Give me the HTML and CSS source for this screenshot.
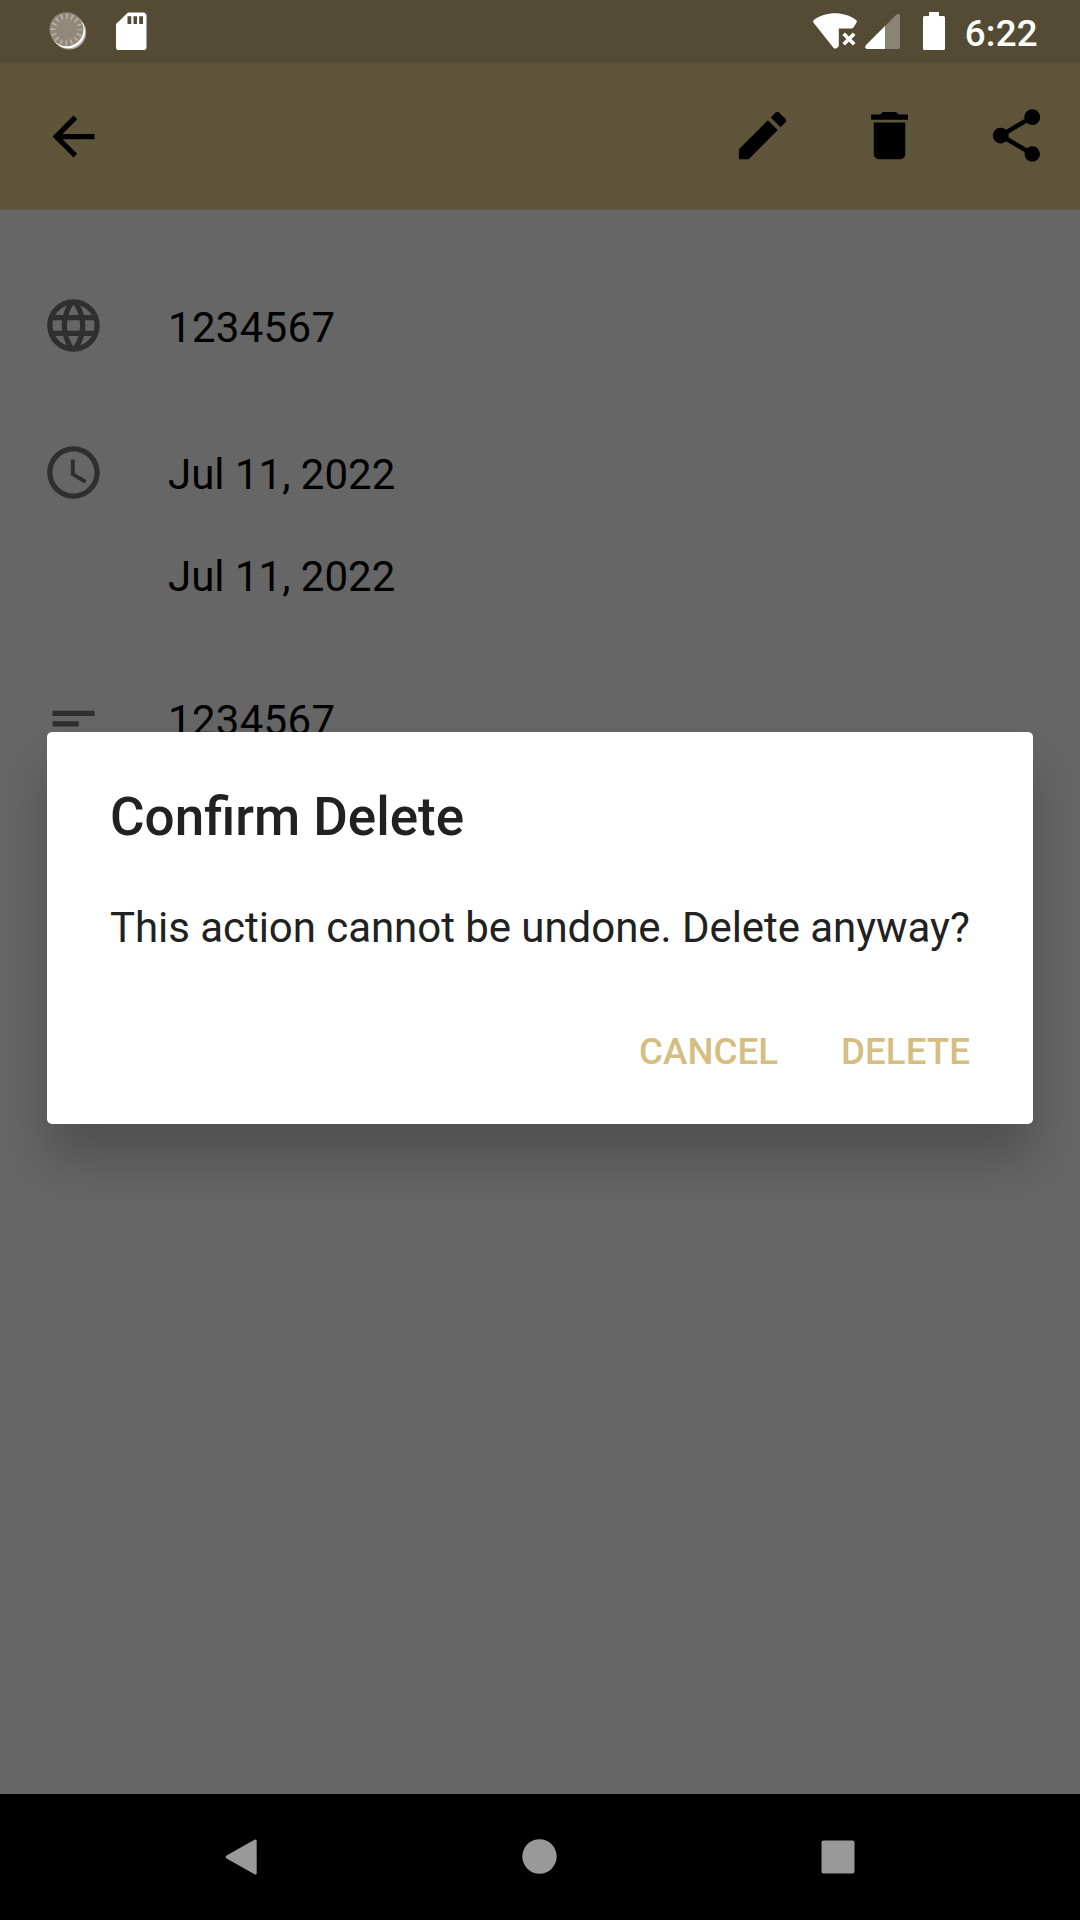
FILE: index.html
```html
<!DOCTYPE html>
<html lang="en">
<head>
<meta charset="utf-8">
<title>Confirm Delete</title>
<link rel="stylesheet" href="styles.css">
</head>
<body>
<div class="screen">
  <header class="status-bar">
    <div class="status-group">
      <svg class="status-icon" width="40" height="40" viewBox="0 0 40 40">
        <circle cx="21.300" cy="22.500" r="17" fill="#aaa497"/>
        <circle cx="20" cy="21.200" r="17" fill="#fff"/>
        <circle cx="18.500" cy="19.300" r="17" fill="#918a7a"/>
        <circle cx="18.500" cy="19.500" r="13.300" fill="none" stroke="#bbb6ab" stroke-width="5" stroke-dasharray="1.5 3.723" stroke-dashoffset=".75"/>
      </svg>
      <svg class="status-icon sd-icon" width="32" height="40" viewBox="0 0 32 40">
        <path fill="#fff" fill-rule="evenodd" d="M12 2.500h15q3.500 0 3.500 3.500v31q0 3.500-3.500 3.500H3.500Q0 40.500 0 37V14zM11.500 6.300v7.700h3.800V6.300zm6 0v7.700h3.500V6.300zm5.700 0v7.700H27V6.300z"/>
      </svg>
    </div>
    <div class="status-group">
      <svg class="status-icon" width="44" height="40" viewBox="0 0 44 40">
        <path fill="#fff" d="M.4 12.500Q-.4 11 .9 9.900C13 1 31 1 43 9.900q1.300 1.100.6 2.600l-2.800 4.500q-1 1.500-2.800 1.500H25.800v17.200c0 1-2.500 3.300-3.800 2.900q-1.200-.2-2-1.400z"/>
        <path stroke="#fff" stroke-width="3.700" fill="none" d="m30.700 23.700 10.500 10.600m0-10.600L30.700 34.300"/>
      </svg>
      <svg class="status-icon signal-icon" width="35" height="40" viewBox="0 0 35 40">
        <path fill="#8a8474" d="M20 16 31 5q4-3 4 1v31q0 2-2 2H20z"/>
        <path fill="#fff" d="M20 16v23H2q-3-.5-1-4z"/>
      </svg>
      <svg class="status-icon battery-icon" width="22" height="40" viewBox="0 0 22 40">
        <path fill="#fff" d="M6 2h10v4h4.500Q22 6 22 7.500v31q0 1.500-1.500 1.500h-19Q0 40 0 38.500v-31Q0 6 1.500 6H6z"/>
      </svg>
      <span class="time">6:22</span>
    </div>
  </header>

  <nav class="toolbar">
    <svg class="icon" viewBox="0 0 24 24"><path d="M20 11H7.830l5.590-5.590L12 4l-8 8 8 8 1.410-1.410L7.830 13H20z"/></svg>
    <div class="actions">
      <svg class="icon" viewBox="0 0 24 24"><path d="M3 17.250V21h3.750L17.810 9.940l-3.750-3.750zM20.710 7.040a1 1 0 0 0 0-1.410l-2.340-2.340a1 1 0 0 0-1.410 0l-1.830 1.830 3.750 3.750z"/></svg>
      <svg class="icon" viewBox="0 0 24 24"><path d="M6 19c0 1.100.9 2 2 2h8c1.100 0 2-.9 2-2V7H6zM19 4h-3.500l-1-1h-5l-1 1H5v2h14z"/></svg>
      <svg class="icon" viewBox="0 0 24 24"><path d="M18 16.080c-.76 0-1.440.3-1.960.77L8.910 12.700c.05-.23.09-.46.09-.7s-.04-.47-.09-.7l7.050-4.110c.54.5 1.250.81 2.040.81 1.660 0 3-1.340 3-3s-1.340-3-3-3-3 1.340-3 3c0 .24.04.47.09.7L8.040 9.810C7.500 9.310 6.790 9 6 9c-1.660 0-3 1.340-3 3s1.340 3 3 3c.79 0 1.500-.31 2.040-.81l7.120 4.160c-.05.21-.08.43-.08.650 0 1.610 1.310 2.920 2.920 2.920s2.920-1.310 2.920-2.920-1.310-2.920-2.920-2.920z"/></svg>
    </div>
  </nav>

  <main class="details">
    <section class="detail detail-name">
      <svg class="icon muted" viewBox="0 0 24 24"><path d="M11.990 2C6.470 2 2 6.480 2 12s4.470 10 9.990 10C17.520 22 22 17.520 22 12S17.520 2 11.990 2zm6.930 6h-2.950c-.32-1.250-.78-2.450-1.380-3.560 1.840.63 3.370 1.910 4.330 3.560zM12 4.040c.83 1.200 1.480 2.530 1.910 3.960h-3.820c.43-1.430 1.080-2.760 1.910-3.960zM4.260 14C4.100 13.360 4 12.690 4 12s.1-1.360.26-2h3.380c-.08.66-.14 1.320-.14 2s.06 1.340.14 2zm.82 2h2.950c.32 1.250.78 2.450 1.380 3.560-1.840-.63-3.370-1.900-4.330-3.560zm2.950-8H5.080c.96-1.660 2.490-2.930 4.330-3.560C8.810 5.550 8.350 6.750 8.030 8zM12 19.960c-.83-1.200-1.480-2.530-1.910-3.960h3.820c-.43 1.430-1.080 2.760-1.910 3.960zM14.340 14H9.660c-.09-.66-.16-1.320-.16-2s.07-1.350.16-2h4.680c.09.65.16 1.320.16 2s-.07 1.340-.16 2zm.25 5.560c.6-1.110 1.060-2.310 1.380-3.560h2.950c-.96 1.650-2.490 2.930-4.330 3.560zM16.360 14c.08-.66.14-1.320.14-2s-.06-1.340-.14-2h3.380c.16.64.26 1.310.26 2s-.1 1.360-.26 2z"/></svg>
      <div class="values"><p class="number">1234567</p></div>
    </section>
    <section class="detail detail-dates">
      <svg class="icon muted" viewBox="0 0 24 24"><path d="M11.990 2C6.470 2 2 6.480 2 12s4.470 10 9.990 10C17.520 22 22 17.520 22 12S17.520 2 11.990 2zM12 20c-4.420 0-8-3.580-8-8s3.580-8 8-8 8 3.580 8 8-3.580 8-8 8z"/><path d="M12.500 7H11v6l5.250 3.150.75-1.230-4.500-2.670z"/></svg>
      <div class="values"><p>Jul 11, 2022</p><p>Jul 11, 2022</p></div>
    </section>
    <section class="detail">
      <svg class="icon muted" viewBox="0 0 24 24"><path d="M4 9h16v2H4zM4 13h10v2H4z"/></svg>
      <div class="values"><p class="number">1234567</p></div>
    </section>
  </main>

  <footer class="nav-bar">
    <svg width="36" height="40" viewBox="0 0 36 40"><path d="M4 18.200 31.500 2.700q2.200-1 2.200 1.300v32q0 2.300-2.200 1.300L4 21.800q-3-1.800 0-3.600z"/></svg>
    <svg width="36" height="40" viewBox="0 0 36 40"><circle cx="17.500" cy="19.500" r="17.200"/></svg>
    <svg width="36" height="40" viewBox="0 0 36 40"><rect x=".5" y="3.400" width="33" height="33" rx="2"/></svg>
  </footer>

  <div class="overlay">
    <div class="dialog" role="alertdialog">
      <h1 class="dialog-title">Confirm Delete</h1>
      <p class="dialog-message">This action cannot be undone. Delete anyway?</p>
      <div class="dialog-buttons">
        <button class="button">CANCEL</button>
        <button class="button">DELETE</button>
      </div>
    </div>
  </div>
</div>
</body>
</html>
```
FILE: styles.css
```css
* { box-sizing: border-box; margin: 0; padding: 0; }

body {
  font-family: Roboto, sans-serif;
  color: #000;
}

.screen {
  position: relative;
  display: flex;
  flex-direction: column;
  width: 1080px;
  height: 1920px;
  overflow: hidden;
  background: #666;
}

svg { display: block; flex: none; }

.status-bar {
  display: flex;
  justify-content: space-between;
  height: 63px;
  padding: 0 42px 0 48px;
  background: #544b34;
}

.status-group { display: flex; padding-top: 10px; }
.sd-icon { margin-left: 28px; }
.signal-icon { margin-left: 8px; }
.battery-icon { margin-left: 23px; }

.time {
  margin-left: 20px;
  color: #fff;
  font-size: 36.75px;
  font-weight: 500;
  letter-spacing: .25px;
  line-height: 48px;
}

.toolbar {
  display: flex;
  align-items: center;
  justify-content: space-between;
  height: 147px;
  padding: 0 32px 0 42px;
  background: #5e5439;
}

.icon { width: 63px; height: 63px; fill: #000; }
.icon.muted { fill: #2f2f2f; }
.actions { display: flex; gap: 64px; padding-bottom: 2px; }

.details {
  flex: 1;
  display: flex;
  flex-direction: column;
  padding: 84px 42px 0;
}

.detail { display: flex; gap: 63px; }
.detail-name { margin-bottom: 84px; }
.detail-dates { margin-bottom: 86px; }

.values {
  display: flex;
  flex-direction: column;
  gap: 53px;
  padding-top: 9px;
  font-size: 42px;
  line-height: 49px;
}

.number { letter-spacing: .3px; }

.nav-bar {
  display: flex;
  align-items: center;
  justify-content: center;
  gap: 263px;
  height: 126px;
  background: #000;
  fill: #999;
}

.overlay {
  position: absolute;
  inset: 63px 0 127px;
  display: flex;
  align-items: center;
  justify-content: center;
}

.dialog {
  width: 986px;
  height: 392px;
  padding: 54px 63px 0;
  border-radius: 5px;
  background: #fff;
  color: #212121;
  box-shadow: 0 35px 50px rgba(0, 0, 0, .22);
}

.dialog-title { font-size: 53px; font-weight: 500; line-height: 62px; }
.dialog-message { margin-top: 55px; font-size: 42px; line-height: 49px; letter-spacing: -.05px; white-space: nowrap; }
.dialog-buttons { display: flex; justify-content: flex-end; gap: 63px; margin-top: 78px; }

.button {
  border: 0;
  background: none;
  color: #d4be82;
  font: 500 36.75px/43px Roboto, sans-serif;
}
```
